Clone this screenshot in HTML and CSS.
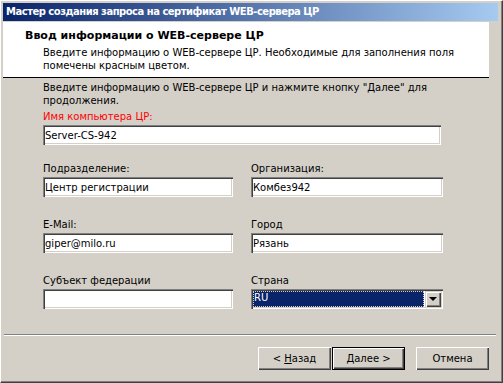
FILE: index.html
```html
<!DOCTYPE html>
<html lang="ru">
<head>
    <meta charset="UTF-8">
    <title>Мастер создания запроса на сертификат WEB-сервера ЦР</title>
    <link rel="stylesheet" href="styles.css">
</head>
<body>
    <div class="window">
        <!-- Title bar -->
        <div class="titlebar">Мастер создания запроса на сертификат WEB-сервера ЦР</div>

        <!-- Wizard header -->
        <div class="header">
            <div class="header-title">Ввод информации о WEB-сервере ЦР</div>
            <div class="header-desc">Введите информацию о WEB-сервере ЦР. Необходимые для заполнения поля<br>помечены красным цветом.</div>
        </div>

        <!-- Form -->
        <div class="content">
            <p class="intro">Введите информацию о WEB-сервере ЦР и нажмите кнопку "Далее" для<br>продолжения.</p>

            <div class="field">
                <label class="required">Имя компьютера ЦР:</label>
                <input class="textbox wide" type="text" value="Server-CS-942">
            </div>

            <div class="fields">
                <div class="field">
                    <label>Подразделение:</label>
                    <input class="textbox" type="text" value="Центр регистрации">
                </div>
                <div class="field">
                    <label>Организация:</label>
                    <input class="textbox" type="text" value="Комбез942">
                </div>
                <div class="field">
                    <label>E-Mail:</label>
                    <input class="textbox" type="text" value="giper@milo.ru">
                </div>
                <div class="field">
                    <label>Город</label>
                    <input class="textbox" type="text" value="Рязань">
                </div>
                <div class="field">
                    <label>Субъект федерации</label>
                    <input class="textbox" type="text" value="">
                </div>
                <div class="field">
                    <label>Страна</label>
                    <div class="combo">
                        <div class="combo-value">RU</div>
                        <div class="combo-btn"><span class="arrow"></span></div>
                    </div>
                </div>
            </div>
        </div>

        <!-- Buttons -->
        <div class="footer">
            <div class="buttons">
                <button class="btn">&lt; <u>Н</u>азад</button>
                <button class="btn default"><u>Д</u>алее &gt;</button>
                <button class="btn cancel">Отмена</button>
            </div>
        </div>
    </div>
</body>
</html>
```

FILE: styles.css
```css
/* Global */
* {
    box-sizing: border-box;
}

body {
    margin: 0;
    background: #d4d0c8;
    font-family: "DejaVu Sans", sans-serif;
    font-size: 10px;
    color: #000;
}

/* Window frame */
.window {
    width: 503px;
    height: 383px;
    display: flex;
    flex-direction: column;
    background: #d4d0c8;
    border: 1px solid;
    border-color: #fff #404040 #404040 #fff;
    box-shadow: inset -1px -1px 0 #808080;
    padding: 2px 4px 1px 2px;
}

.titlebar {
    height: 18px;
    line-height: 18px;
    padding-left: 3px;
    margin-bottom: 1px;
    background: linear-gradient(to right, #0a246a, #a6caf0);
    color: #fff;
    font-weight: bold;
    letter-spacing: -0.5px;
    white-space: nowrap;
}

/* Wizard header */
.header {
    height: 56px;
    margin-right: 9px;
    padding: 7px 0 0 22px;
    background: #fff;
    border-bottom: 1px solid #000;
}

.header-title {
    font-size: 11px;
    font-weight: bold;
    line-height: 13px;
}

.header-desc {
    margin-top: 4px;
    padding-left: 18px;
    line-height: 13px;
}

/* Form */
.content {
    flex: 1;
    padding: 3px 0 0 40px;
}

.intro {
    margin: 0 0 3px;
    line-height: 13px;
}

.field label {
    display: block;
    line-height: 13px;
    margin-bottom: 2px;
}

.field label.required {
    color: #f00;
}

.textbox {
    display: block;
    width: 190px;
    height: 20px;
    padding: 0 2px;
    border: none;
    outline: none;
    background: #fff;
    font: inherit;
    color: #000;
    box-shadow: inset 1px 1px 0 #808080, inset 2px 2px 0 #404040,
                inset -1px -1px 0 #fff, inset -2px -2px 0 #d4d0c8;
}

.textbox.wide {
    width: 398px;
}

.fields {
    display: grid;
    grid-template-columns: 190px 192px;
    column-gap: 18px;
    row-gap: 21px;
    margin-top: 17px;
}

.fields .field:nth-child(2n) .textbox {
    width: 192px;
}

/* Combo box */
.combo {
    display: flex;
    width: 192px;
    height: 20px;
    padding: 2px;
    background: #fff;
    box-shadow: inset 1px 1px 0 #808080, inset 2px 2px 0 #404040,
                inset -1px -1px 0 #fff, inset -2px -2px 0 #d4d0c8;
}

.combo-value {
    flex: 1;
    margin-right: 1px;
    padding-left: 1px;
    background: #0a246a;
    color: #fff;
    line-height: 14px;
    outline: 1px dotted #d4d0c8;
    outline-offset: -1px;
}

.combo-btn {
    width: 16px;
    height: 16px;
    display: flex;
    align-items: center;
    justify-content: center;
    background: #d4d0c8;
    box-shadow: inset 1px 1px 0 #d4d0c8, inset 2px 2px 0 #fff,
                inset -1px -1px 0 #404040, inset -2px -2px 0 #808080;
}

.arrow {
    width: 0;
    height: 0;
    border-left: 4px solid transparent;
    border-right: 4px solid transparent;
    border-top: 4px solid #000;
}

/* Footer buttons */
.footer {
    margin: 0 2px 0 1px;
    border-top: 1px solid #808080;
}

.buttons {
    display: flex;
    justify-content: flex-end;
    padding: 11px 7px 11px 0;
    border-top: 1px solid #fff;
}

.btn {
    width: 73px;
    height: 23px;
    padding: 0;
    border: none;
    background: #d4d0c8;
    font: inherit;
    color: #000;
    box-shadow: inset 1px 1px 0 #fff, inset -1px -1px 0 #404040,
                inset -2px -2px 0 #808080;
}

.btn.default {
    margin-left: 1px;
    box-shadow: inset 0 0 0 1px #000, inset 2px 2px 0 #fff,
                inset -2px -2px 0 #404040, inset -3px -3px 0 #808080;
}

.btn.cancel {
    margin-left: 11px;
}
```
